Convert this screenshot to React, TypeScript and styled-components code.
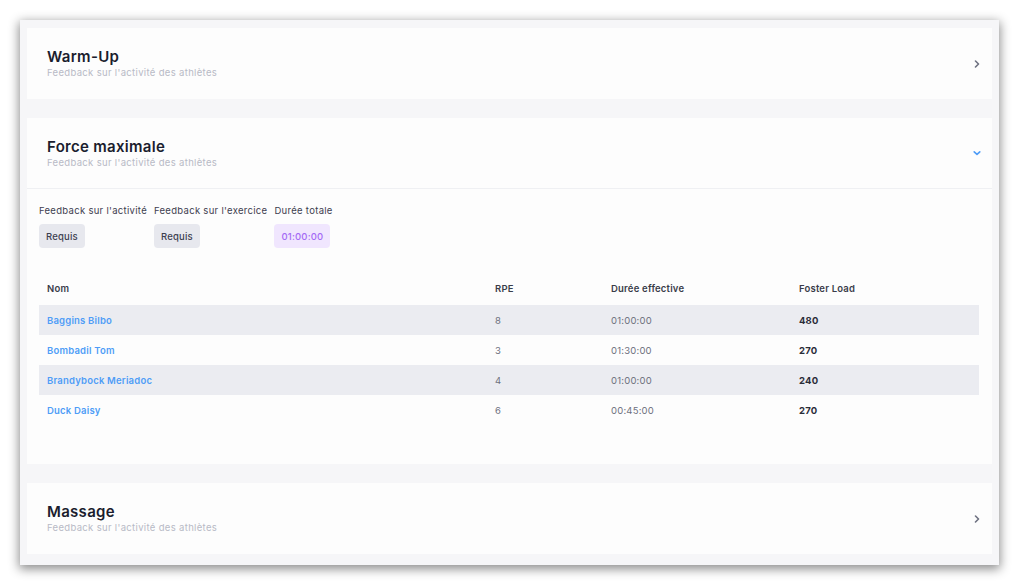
import styled, { createGlobalStyle } from 'styled-components';

const GlobalStyle = createGlobalStyle`
  html, body {
    margin: 0;
    padding: 0;
    background: #ffffff;
  }
  body {
    font-family: 'Inter', 'Noto Sans', 'Liberation Sans', sans-serif;
    -webkit-font-smoothing: antialiased;
  }
`

const Page = styled.div`
  width: 1019px;
  height: 585px;
  box-sizing: border-box;
  padding: 20px;
`

const Panel = styled.div`
  box-sizing: border-box;
  height: 545px;
  background: #f6f6f8;
  box-shadow: 0 3px 10px 1px rgba(0, 0, 0, 0.45);
  padding: 8px 7px 9px 7px;
  display: flex;
  flex-direction: column;
  gap: 19px;
`

const Card = styled.section`
  background: #fdfdfd;
`

const CardHeader = styled.div<{ $open?: boolean }>`
  height: 71px;
  box-sizing: border-box;
  display: flex;
  align-items: center;
  justify-content: space-between;
  padding: 0 11px 0 20px;
  border-bottom: ${p => (p.$open ? '1px solid #eff0f3' : 'none')};
`

const Titles = styled.div`
  display: flex;
  flex-direction: column;
  gap: 1px;
`

const Title = styled.h2`
  margin: 0;
  font-size: 15px;
  line-height: 18px;
  font-weight: 600;
  color: #1b1d2e;
  letter-spacing: 0.3px;
`

const Subtitle = styled.span`
  font-size: 9.5px;
  line-height: 12px;
  letter-spacing: 0.33px;
  color: #b8bac6;
`

const Chevron = styled.svg<{ $color: string }>`
  width: 8px;
  height: 8px;
  color: ${p => p.$color};
  flex: none;
`

const Body = styled.div`
  padding: 15px 13px 39px 12px;
`

const Settings = styled.div`
  display: flex;
  gap: 7px;
`

const Setting = styled.div`
  display: flex;
  flex-direction: column;
  align-items: flex-start;
  gap: 6px;
`

const SettingLabel = styled.span`
  font-size: 9.5px;
  line-height: 14px;
  letter-spacing: 0.3px;
  color: #3d4050;
`

const Badge = styled.span<{ $tone?: 'grey' | 'purple' }>`
  height: 24px;
  box-sizing: border-box;
  display: inline-flex;
  align-items: center;
  padding: 0 7px;
  border-radius: 4px;
  font-size: 9.5px;
  font-weight: 500;
  letter-spacing: 0.2px;
  background: ${p => (p.$tone === 'purple' ? '#f0e6fe' : '#e7e8ee')};
  color: ${p => (p.$tone === 'purple' ? '#a46bf5' : '#3d4050')};
`

const Table = styled.div`
  margin-top: 25px;
  display: flex;
  flex-direction: column;
`

const Row = styled.div<{ $head?: boolean; $shade?: boolean }>`
  display: grid;
  grid-template-columns: 448px 116px 188px 1fr;
  align-items: center;
  height: 30px;
  padding-left: 8px;
  margin-bottom: ${p => (p.$head ? '2px' : '0')};
  background: ${p => (p.$shade ? '#ebecf1' : 'transparent')};
  font-size: 9.5px;
  letter-spacing: 0.2px;
`

const HeadCell = styled.span`
  font-weight: 600;
  color: #3a3c4a;
`

const NameCell = styled.span`
  font-weight: 600;
  color: #4f9df7;
`

const Cell = styled.span<{ $strong?: boolean }>`
  font-weight: ${p => (p.$strong ? 700 : 400)};
  color: ${p => (p.$strong ? '#2a2c39' : '#6d707d')};
`

const ChevronRight = () => (
  <Chevron $color="#6e7181" viewBox="0 0 8 8">
    <path d="M2.5 1 L5.5 4 L2.5 7" fill="none" stroke="currentColor" strokeWidth="1.6" strokeLinecap="round" strokeLinejoin="round" />
  </Chevron>
)

const ChevronDown = () => (
  <Chevron $color="#4f9df7" viewBox="0 0 8 8">
    <path d="M1.2 2.8 L4 5.4 L6.8 2.8" fill="none" stroke="currentColor" strokeWidth="1.6" strokeLinecap="round" strokeLinejoin="round" />
  </Chevron>
)

const athletes = [
  { name: 'Baggins Bilbo', rpe: 8, duration: '01:00:00', load: 480 },
  { name: 'Bombadil Tom', rpe: 3, duration: '01:30:00', load: 270 },
  { name: 'Brandybock Meriadoc', rpe: 4, duration: '01:00:00', load: 240 },
  { name: 'Duck Daisy', rpe: 6, duration: '00:45:00', load: 270 },
]

const subtitle = "Feedback sur l'activité des athlètes"

export default function App() {
  return (
    <Page>
      <GlobalStyle />
      <Panel>
        <Card>
          <CardHeader>
            <Titles>
              <Title>Warm-Up</Title>
              <Subtitle>{subtitle}</Subtitle>
            </Titles>
            <ChevronRight />
          </CardHeader>
        </Card>

        <Card>
          <CardHeader $open>
            <Titles>
              <Title>Force maximale</Title>
              <Subtitle>{subtitle}</Subtitle>
            </Titles>
            <ChevronDown />
          </CardHeader>
          <Body>
            <Settings>
              <Setting>
                <SettingLabel>Feedback sur l'activité</SettingLabel>
                <Badge>Requis</Badge>
              </Setting>
              <Setting>
                <SettingLabel>Feedback sur l'exercice</SettingLabel>
                <Badge>Requis</Badge>
              </Setting>
              <Setting>
                <SettingLabel>Durée totale</SettingLabel>
                <Badge $tone="purple">01:00:00</Badge>
              </Setting>
            </Settings>

            <Table>
              <Row $head>
                <HeadCell>Nom</HeadCell>
                <HeadCell>RPE</HeadCell>
                <HeadCell>Durée effective</HeadCell>
                <HeadCell>Foster Load</HeadCell>
              </Row>
              {athletes.map((a, i) => (
                <Row key={a.name} $shade={i % 2 === 0}>
                  <NameCell>{a.name}</NameCell>
                  <Cell>{a.rpe}</Cell>
                  <Cell>{a.duration}</Cell>
                  <Cell $strong>{a.load}</Cell>
                </Row>
              ))}
            </Table>
          </Body>
        </Card>

        <Card>
          <CardHeader>
            <Titles>
              <Title>Massage</Title>
              <Subtitle>{subtitle}</Subtitle>
            </Titles>
            <ChevronRight />
          </CardHeader>
        </Card>
      </Panel>
    </Page>
  );
}
